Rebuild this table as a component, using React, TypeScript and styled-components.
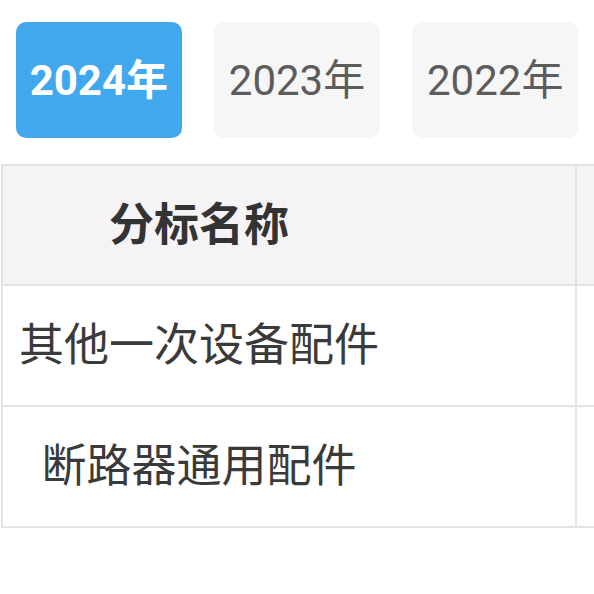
import React, { useState } from "react";
import styled, { createGlobalStyle } from "styled-components";

const Global = createGlobalStyle`
  html, body { margin: 0; padding: 0; background: #ffffff; }
  body { font-family: Roboto, "Noto Sans CJK SC", sans-serif; }
`;

const Page = styled.div`
  width: 594px;
  overflow: hidden;
`;

const TabBar = styled.div`
  display: flex;
  gap: 32.5px;
  padding: 22px 16px 0;
`;

const Tab = styled.button<{ $active: boolean }>`
  width: 167px;
  height: 116px;
  border: none;
  border-radius: 10px;
  padding: 0 0 8px;
  display: flex;
  align-items: center;
  justify-content: center;
  font-family: Roboto, "Noto Sans CJK SC", sans-serif;
  font-size: 42px;
  font-weight: ${(p) => (p.$active ? 700 : 400)};
  color: ${(p) => (p.$active ? "#ffffff" : "#5c5c5c")};
  background: ${(p) => (p.$active ? "#42a8ee" : "#f6f6f6")};
  cursor: pointer;
`;

const TableWrap = styled.div`
  margin-top: 26px;
  margin-left: 1px;
  width: 800px;
`;

const Table = styled.table`
  border-collapse: collapse;
  table-layout: fixed;
  width: 800px;
`;

const HeadCell = styled.th`
  height: 110px;
  background: #f6f3f6;
  border: 2px solid #e4e2e4;
  color: #333333;
  font-family: "Noto Sans CJK SC", sans-serif;
  font-size: 45px;
  font-weight: 700;
  text-align: center;
  padding: 0 180px 8px 0;
`;

const Cell = styled.td`
  height: 111px;
  border: 2px solid #e4e4e4;
  color: #3a3a3a;
  font-family: "Noto Sans CJK SC", sans-serif;
  font-size: 45px;
  font-weight: 400;
  text-align: center;
  padding: 0 180px 8px 0;
  white-space: nowrap;
`;

const years = ["2024年", "2023年", "2022年"];
const rows = ["其他一次设备配件", "断路器通用配件"];

export default function App() {
  const [active, setActive] = useState(0);
  return (
    <Page>
      <Global />
      <TabBar>
        {years.map((y, i) => (
          <Tab key={y} $active={i === active} onClick={() => setActive(i)}>
            {y}
          </Tab>
        ))}
      </TabBar>
      <TableWrap>
        <Table>
          <colgroup>
            <col style={{ width: 574 }} />
            <col style={{ width: 226 }} />
          </colgroup>
          <thead>
            <tr>
              <HeadCell>分标名称</HeadCell>
              <HeadCell></HeadCell>
            </tr>
          </thead>
          <tbody>
            {rows.map((r) => (
              <tr key={r}>
                <Cell>{r}</Cell>
                <Cell></Cell>
              </tr>
            ))}
          </tbody>
        </Table>
      </TableWrap>
    </Page>
  );
}
